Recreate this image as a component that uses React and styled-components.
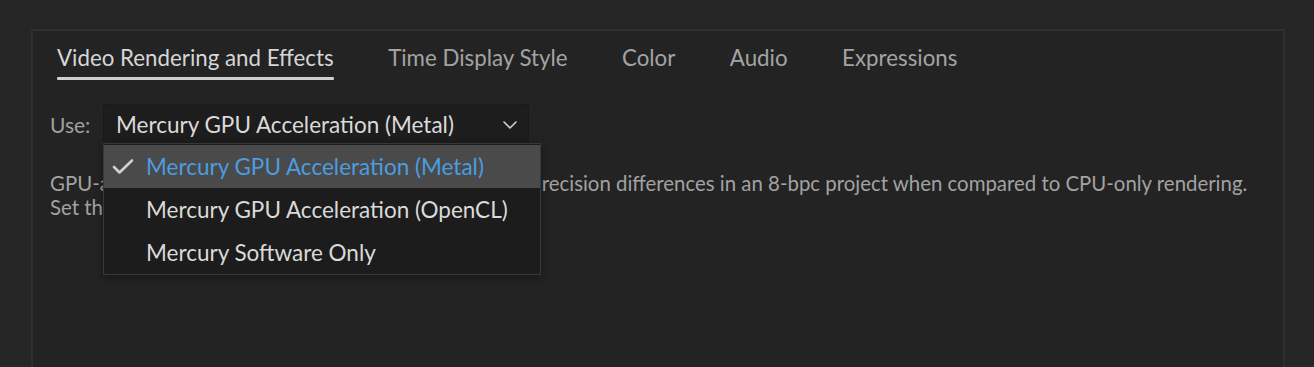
import React from "react";
import styled, { createGlobalStyle } from "styled-components";

const Global = createGlobalStyle`
  html, body { margin: 0; padding: 0; background: #262626; overflow: hidden; }
  body { font-family: Lato, "Open Sans", sans-serif; }
`;

const Page = styled.div`
  height: 367px;
  overflow: hidden;
  padding: 29px 29px 0 31px;
  box-sizing: border-box;
  background: #262626;
`;

const Panel = styled.div`
  width: 1254px;
  height: 338px;
  box-sizing: border-box;
  border: 2px solid #2f2f2f;
  border-bottom: none;
  background: #232323;
`;

const Tabs = styled.div`
  display: flex;
  gap: 54.5px;
  padding: 13px 0 0 24px;
`;

const Tab = styled.div`
  display: flex;
  flex-direction: column;
  font-size: 22.3px;
  line-height: 28px;
  color: ${(p) => (p.$active ? "#d6d6d6" : "#a3a3a3")};
  &::after {
    content: "";
    display: block;
    height: 3px;
    margin-top: 5px;
    border-radius: 1px;
    background: ${(p) => (p.$active ? "#cfcfcf" : "transparent")};
  }
`;

const Content = styled.div`
  padding: 24px 0 0 17px;
`;

const Row = styled.div`
  display: flex;
  align-items: center;
  gap: 11px;
`;

const Label = styled.span`
  width: 42px;
  font-size: 21px;
  color: #a0a0a0;
`;

const SelectWrap = styled.div`
  position: relative;
`;

const Select = styled.div`
  width: 426px;
  height: 41px;
  box-sizing: border-box;
  display: flex;
  align-items: center;
  justify-content: space-between;
  padding: 0 11px 0 12px;
  background: #1d1d1d;
  border: 1px solid #1a1a1a;
  border-radius: 2px;
  font-size: 22.5px;
  color: #dadada;
`;

const Menu = styled.div`
  position: absolute;
  left: 0;
  top: 39px;
  width: 438px;
  box-sizing: border-box;
  padding-top: 1px;
  background: #1c1c1c;
  border: 1px solid #383838;
  box-shadow: 0 3px 8px rgba(0, 0, 0, 0.35);
  z-index: 2;
`;

const Item = styled.div`
  height: 43px;
  display: flex;
  align-items: center;
  font-size: 22.5px;
  color: ${(p) => (p.$selected ? "#4c9ce0" : "#dadada")};
  background: ${(p) => (p.$selected ? "#4a4a4a" : "transparent")};
`;

const Check = styled.span`
  width: 42px;
  display: flex;
  justify-content: flex-start;
  padding-left: 8px;
  box-sizing: border-box;
`;

const Desc = styled.p`
  margin: 26px 0 0;
  font-size: 20.4px;
  line-height: 24px;
  color: #a2a2a2;
  white-space: nowrap;
`;

const Chevron = () => (
  <svg width="14" height="8" viewBox="0 0 14 8" fill="none">
    <path d="M1 1l6 6 6-6" stroke="#cfcfcf" strokeWidth="1.6" strokeLinecap="round" strokeLinejoin="round" />
  </svg>
);

const CheckIcon = () => (
  <svg width="22" height="17" viewBox="0 0 22 17" fill="none">
    <path d="M2 9l5.5 5.5L20 2.5" stroke="#d0d0d0" strokeWidth="2.6" strokeLinecap="round" strokeLinejoin="round" />
  </svg>
);

const tabs = ["Video Rendering and Effects", "Time Display Style", "Color", "Audio", "Expressions"];
const options = [
  "Mercury GPU Acceleration (Metal)",
  "Mercury GPU Acceleration (OpenCL)",
  "Mercury Software Only",
];

export default function App() {
  return (
    <>
      <Global />
      <Page>
        <Panel>
          <Tabs>
            {tabs.map((t, i) => (
              <Tab key={t} $active={i === 0}>{t}</Tab>
            ))}
          </Tabs>
          <Content>
            <Row>
              <Label>Use:</Label>
              <SelectWrap>
                <Select>
                  <span>{options[0]}</span>
                  <Chevron />
                </Select>
                <Menu>
                  {options.map((o, i) => (
                    <Item key={o} $selected={i === 0}>
                      <Check>{i === 0 && <CheckIcon />}</Check>
                      <span>{o}</span>
                    </Item>
                  ))}
                </Menu>
              </SelectWrap>
            </Row>
            <Desc>
              GPU-accelerated effects and rendering may have tiny precision differences in an 8-bpc project when compared to CPU-only rendering.
              <br />
              Set the project to 16-bpc or 32-bpc to reduce them.
            </Desc>
          </Content>
        </Panel>
      </Page>
    </>
  );
}
